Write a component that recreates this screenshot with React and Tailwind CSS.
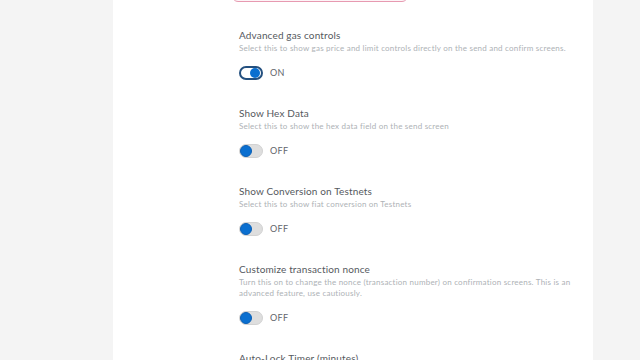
const rows = [
  {
    title: "Advanced gas controls",
    desc: "Select this to show gas price and limit controls directly on the send and confirm screens.",
    on: true,
  },
  {
    title: "Show Hex Data",
    desc: "Select this to show the hex data field on the send screen",
    on: false,
  },
  {
    title: "Show Conversion on Testnets",
    desc: "Select this to show fiat conversion on Testnets",
    on: false,
  },
  {
    title: "Customize transaction nonce",
    desc: "Turn this on to change the nonce (transaction number) on confirmation screens. This is an advanced feature, use cautiously.",
    on: false,
  },
];

function Toggle({ on }) {
  return (
    <div className="flex items-center gap-[7px]">
      {on ? (
        <div className="w-[24px] h-[14px] rounded-full border-[2px] border-[#24507f] bg-white flex items-center justify-end pr-[1px]">
          <div className="w-[10px] h-[10px] rounded-full bg-[#0a6fd0]" />
        </div>
      ) : (
        <div className="w-[24px] h-[14px] rounded-full bg-[#dedede] border border-[#d2d2d2] flex items-center">
          <div className="w-[12px] h-[12px] rounded-full bg-[#0a6fd0] border border-[#0a5fb5]" />
        </div>
      )}
      <span className="text-[9px] tracking-[0.3px] text-[#5f656b]">{on ? "ON" : "OFF"}</span>
    </div>
  );
}

function Row({ title, desc, on }) {
  return (
    <div className="flex flex-col">
      <div className="text-[10px] leading-[13px] tracking-[0.15px] text-[#55595e]">{title}</div>
      <div className="mt-[1px] text-[8px] leading-[11px] tracking-[0.22px] text-[#aeb2b6] w-[338px]">
        {desc}
      </div>
      <div className="mt-[12px]">
        <Toggle on={on} />
      </div>
    </div>
  );
}

export default function App() {
  return (
    <div
      className="w-[640px] h-[360px] overflow-hidden bg-[#f4f4f4] flex"
      style={{ fontFamily: "Lato, 'Noto Sans', sans-serif" }}
    >
      <div className="ml-[113px] w-[480px] h-full bg-white pl-[126px] flex flex-col">
        <div className="-mt-[38px] -ml-[7px] w-[176px] h-[40px] rounded-[6px] border border-[#e79ab1] bg-[#fdf4f7] shrink-0" />
        <div className="mt-[27px] flex flex-col gap-[27px]">
          {rows.map((r) => (
            <Row key={r.title} {...r} />
          ))}
          <div className="text-[10px] leading-[13px] tracking-[0.15px] text-[#55595e]">
            Auto-Lock Timer (minutes)
          </div>
        </div>
      </div>
    </div>
  );
}
